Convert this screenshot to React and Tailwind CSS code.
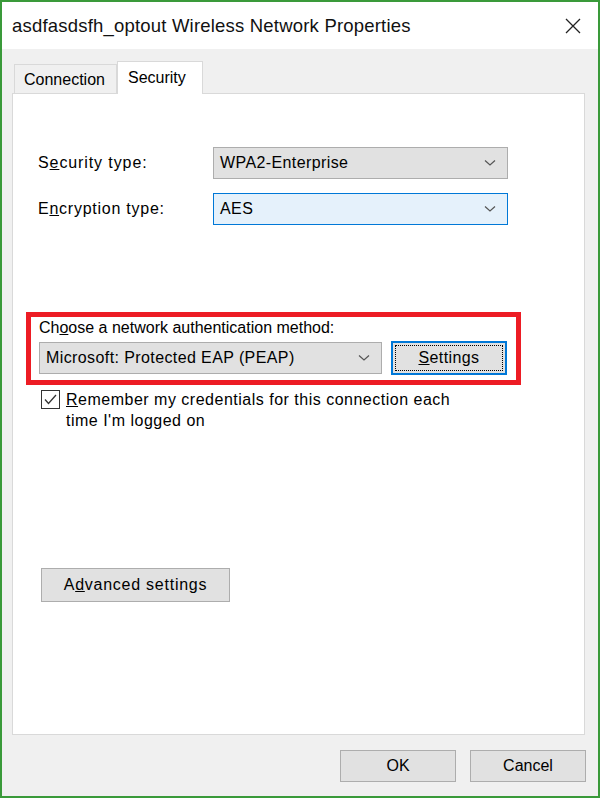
import React from "react";

const Chevron = () => (
  <svg width="12" height="8" viewBox="0 0 12 8" className="shrink-0">
    <path d="M1 1.5 L6 6 L11 1.5" fill="none" stroke="#555" strokeWidth="1.2" />
  </svg>
);

const Select = ({ value, className, focused }) => (
  <div
    className={
      focused
        ? "flex items-center justify-between h-[32px] pl-[6px] pr-[11px] border border-[#0078d7] bg-[#e5f1fb] " + className
        : "flex items-center justify-between h-[32px] pl-[6px] pr-[11px] border border-[#adadad] bg-[#e1e1e1] " + className
    }
  >
    <span className="tracking-[0.4px]">{value}</span>
    <Chevron />
  </div>
);

const Button = ({ children, className }) => (
  <div
    className={
      "flex items-center justify-center border border-[#adadad] bg-[#e1e1e1] " + className
    }
  >
    {children}
  </div>
);

export default function App() {
  return (
    <div className="w-[600px] h-[798px] border-2 border-[#3a9a3a] bg-[#f0f0f0] flex flex-col text-[16px] text-black font-['Liberation_Sans',Arial,sans-serif]">
      {/* title bar */}
      <div className="h-[47px] bg-white flex items-center justify-between pl-[10px] pr-[17px] shrink-0">
        <span className="text-[18.5px] text-[#111] tracking-[0.2px]">asdfasdsfh_optout Wireless Network Properties</span>
        <svg width="16" height="16" viewBox="0 0 16 16">
          <path d="M1 1 L15 15 M15 1 L1 15" stroke="#222" strokeWidth="1.3" />
        </svg>
      </div>

      <div className="flex flex-col flex-1 px-[10px]">
        {/* tabs */}
        <div className="flex items-end h-[44px] pl-[2px]">
          <div className="h-[29px] w-[103px] border border-b-0 border-[#d9d9d9] bg-[#f0f0f0] flex items-center pl-[9px] pt-[2px]">
            Connection
          </div>
          <div className="h-[33px] w-[86px] -mb-px relative z-10 border border-b-0 border-[#d9d9d9] bg-white flex items-start pt-[4px] pl-[10px]">
            Security
          </div>
        </div>

        {/* panel */}
        <div className="h-[642px] w-[573px] border border-[#d9d9d9] bg-white flex flex-col">
          <div className="flex flex-col gap-[14px] mt-[53px] pl-[25px]">
            <div className="flex items-center">
              <span className="w-[175px] tracking-[0.9px]">
                S<span className="underline">e</span>curity type:
              </span>
              <Select value="WPA2-Enterprise" className="w-[295px]" />
            </div>
            <div className="flex items-center">
              <span className="w-[175px] tracking-[0.75px]">
                E<span className="underline">n</span>cryption type:
              </span>
              <Select value="AES" className="w-[295px]" focused />
            </div>
          </div>

          <div className="mt-[87px] ml-[13px] w-[495px] h-[73px] border-[5px] border-[#ed1c24] flex flex-col pl-[8px]">
            <div className="leading-[20px] mt-[1px]">
              Ch<span className="underline">o</span>ose a network authentication method:
            </div>
            <div className="flex items-center gap-[9px] mt-[3px]">
              <Select value="Microsoft: Protected EAP (PEAP)" className="w-[343px]" />
              <div className="w-[116px] h-[34px] border-2 border-[#0078d7] bg-[#e1e1e1] p-[2px]">
                <div className="w-full h-full border border-dotted border-black flex items-center justify-center">
                  <span className="tracking-[0.4px]">
                    <span className="underline">S</span>ettings
                  </span>
                </div>
              </div>
            </div>
          </div>

          <div className="flex items-start mt-[5px] ml-[28px]">
            <div className="w-[19px] h-[19px] border border-[#333] bg-white flex items-center justify-center shrink-0">
              <svg width="15" height="15" viewBox="0 0 15 15">
                <path d="M2 7.5 L5.5 11.5 L13 3" fill="none" stroke="#333" strokeWidth="1.3" />
              </svg>
            </div>
            <div className="ml-[6px] leading-[21px] -mt-[1px] w-[420px] tracking-[0.5px]">
              <span className="underline">R</span>emember my credentials for this connection each
              <br />
              time I'm logged on
            </div>
          </div>

          <Button className="mt-[137px] ml-[28px] w-[189px] h-[34px]">
            <span className="tracking-[0.75px]">
              A<span className="underline">d</span>vanced settings
            </span>
          </Button>
        </div>

        {/* footer */}
        <div className="flex justify-end gap-[14px] mt-[15px] pr-[2px]">
          <Button className="w-[116px] h-[32px]">OK</Button>
          <Button className="w-[116px] h-[32px]">Cancel</Button>
        </div>
      </div>
    </div>
  );
}
